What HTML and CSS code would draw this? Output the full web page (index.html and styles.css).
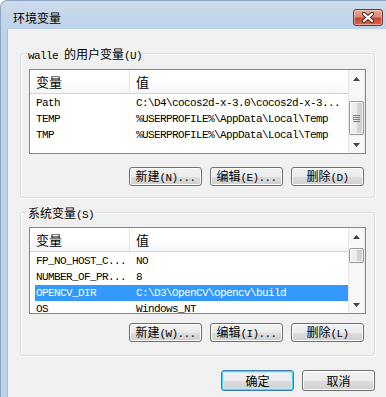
FILE: index.html
```html
<!DOCTYPE html>
<html lang="zh-CN">
<head>
<meta charset="utf-8">
<title>环境变量</title>
<link rel="stylesheet" href="styles.css">
</head>
<body>
<div class="window">
  <div class="titlebar">
    <span class="title">环境变量</span>
    <button class="close" aria-label="关闭">
      <svg width="14" height="11" viewBox="0 0 14 11">
        <path d="M3 2 L11 9 M11 2 L3 9" stroke="#5b2820" stroke-width="4.2" stroke-linecap="round"/>
        <path d="M3 2 L11 9 M11 2 L3 9" stroke="#ffffff" stroke-width="2.2" stroke-linecap="round"/>
      </svg>
    </button>
  </div>
  <div class="frame">
    <div class="edge"></div>
    <div class="client">
      <section class="group g1">
        <div class="legend"><span class="a">walle </span>的用户变量<span class="a">(U)</span></div>
        <div class="list l1">
          <div class="list-main">
            <div class="head"><div class="h1">变量</div><div class="h2">值</div></div>
            <div class="row first"><span class="c1">Path</span><span class="c2">C:\D4\cocos2d-x-3.0\cocos2d-x-3...</span></div>
            <div class="row"><span class="c1">TEMP</span><span class="c2">%USERPROFILE%\AppData\Local\Temp</span></div>
            <div class="row"><span class="c1">TMP</span><span class="c2">%USERPROFILE%\AppData\Local\Temp</span></div>
          </div>
          <div class="sb">
            <div class="sb-btn"><svg width="7" height="4" viewBox="0 0 7 4"><polygon points="0,4 3.5,0 7,4" fill="#444"/></svg></div>
            <div class="sb-track"><div class="thumb t1"><span class="grip"></span></div></div>
            <div class="sb-btn"><svg width="7" height="4" viewBox="0 0 7 4"><polygon points="0,0 7,0 3.5,4" fill="#444"/></svg></div>
          </div>
        </div>
        <div class="btns b1">
          <button class="btn">新建<span class="a">(N)...</span></button>
          <button class="btn">编辑<span class="a">(E)...</span></button>
          <button class="btn">删除<span class="a">(D)</span></button>
        </div>
      </section>

      <section class="group g2">
        <div class="legend">系统变量<span class="a">(S)</span></div>
        <div class="list l2">
          <div class="list-main">
            <div class="head"><div class="h1">变量</div><div class="h2">值</div></div>
            <div class="row first"><span class="c1">FP_NO_HOST_C...</span><span class="c2">NO</span></div>
            <div class="row"><span class="c1">NUMBER_OF_PR...</span><span class="c2">8</span></div>
            <div class="row selected"><span class="c1">OPENCV_DIR</span><span class="c2">C:\D3\OpenCV\opencv\build</span></div>
            <div class="row"><span class="c1">OS</span><span class="c2">Windows_NT</span></div>
          </div>
          <div class="sb">
            <div class="sb-btn"><svg width="7" height="4" viewBox="0 0 7 4"><polygon points="0,4 3.5,0 7,4" fill="#444"/></svg></div>
            <div class="sb-track"><div class="thumb t2"></div></div>
            <div class="sb-btn"><svg width="7" height="4" viewBox="0 0 7 4"><polygon points="0,0 7,0 3.5,4" fill="#444"/></svg></div>
          </div>
        </div>
        <div class="btns b2">
          <button class="btn">新建<span class="a">(W)...</span></button>
          <button class="btn">编辑<span class="a">(I)...</span></button>
          <button class="btn">删除<span class="a">(L)</span></button>
        </div>
      </section>

      <div class="dlg-btns">
        <button class="btn big default">确定</button>
        <button class="btn big">取消</button>
      </div>
    </div>
  </div>
</div>
</body>
</html>
```

FILE: styles.css
```css
html, body {
  margin: 0;
  padding: 0;
}
body {
  width: 386px;
  height: 397px;
  overflow: hidden;
  background: #ffffff;
  font-family: "Noto Sans CJK SC", "Liberation Sans", sans-serif;
  font-size: 12px;
  color: #000;
}
.a {
  font-family: "Liberation Mono", "DejaVu Sans Mono", monospace;
  font-size: 11px;
  letter-spacing: -0.6px;
}
.window {
  height: 397px;
  display: flex;
  flex-direction: column;
}
.titlebar {
  height: 29px;
  box-sizing: border-box;
  padding: 5px 3px 0 12px;
  display: flex;
  align-items: center;
  justify-content: space-between;
  background: linear-gradient(#ccdbec, #bed2e9);
  border-top: 1px solid #8ea6c2;
  border-left: 1px solid #8ea6c2;
  border-top-left-radius: 7px;
}
.title {
  font-size: 12px;
  line-height: 14px;
}
.close {
  width: 30px;
  height: 17px;
  box-sizing: border-box;
  padding: 0;
  margin: 0;
  border: 1px solid #6a3b36;
  border-radius: 3px;
  background: linear-gradient(#e9a99b, #dc8a78 45%, #c6452f 55%, #d16a52);
  box-shadow: inset 0 0 0 1px rgba(255, 220, 210, 0.5);
  display: flex;
  align-items: center;
  justify-content: center;
}
.frame {
  flex: 1;
  display: flex;
  background: #f0f0f0;
}
.edge {
  width: 8px;
  box-sizing: border-box;
  background: #bcd3ec;
  border-left: 1px solid #8ea6c2;
  border-right: 1px solid #a9bfd8;
}
.client {
  flex: 1;
  padding: 0 11px 0 12px;
}
.group {
  border: 1px solid #d5dfe5;
  border-radius: 3px;
  box-shadow: 1px 1px 0 #ffffff, inset 1px 1px 0 #ffffff;
  padding: 0 8px 11px 8px;
}
.g1 {
  margin-top: 24px;
}
.g2 {
  margin-top: 14px;
  padding-bottom: 13px;
}
.legend {
  width: fit-content;
  margin: -7px 0 0 -2px;
  padding: 0 1px;
  line-height: 14px;
  background: #f0f0f0;
  white-space: nowrap;
}
.list {
  display: flex;
  border: 1px solid #828790;
  background: #ffffff;
  box-sizing: border-box;
}
.l1 {
  height: 85px;
  margin-top: 6px;
}
.l2 {
  height: 87px;
  margin-top: 5px;
}
.list-main {
  flex: 1;
  overflow: hidden;
}
.head {
  height: 24px;
  box-sizing: border-box;
  display: flex;
  border-bottom: 1px solid #d5d5d5;
  background: linear-gradient(#ffffff 55%, #f4f5f7);
  font-size: 13px;
  line-height: 23px;
}
.h1 {
  width: 100px;
  box-sizing: border-box;
  padding-left: 6px;
  border-right: 1px solid #e3e5e8;
}
.h2 {
  padding-left: 6px;
}
.row {
  display: flex;
  height: 16px;
  line-height: 16px;
  margin-left: 5px;
  white-space: nowrap;
  font-family: "Liberation Mono", "DejaVu Sans Mono", monospace;
  font-size: 11px;
  letter-spacing: -0.6px;
}
.row.first {
  margin-top: 1px;
}
.row.selected {
  background: #3399ff;
  color: #ffffff;
}
.c1 {
  width: 95px;
  box-sizing: border-box;
  padding-left: 1px;
  overflow: hidden;
}
.c2 {
  padding-left: 6px;
}
.sb {
  width: 17px;
  display: flex;
  flex-direction: column;
  background: linear-gradient(to right, #e6e6e6, #f7f7f7 2px, #f7f7f7 14px, #ececec);
}
.sb-btn {
  height: 17px;
  display: flex;
  align-items: center;
  justify-content: center;
}
.sb-btn svg {
  display: block;
}
.sb-track {
  flex: 1;
}
.thumb {
  margin: 0 1px;
  box-sizing: border-box;
  border: 1px solid #9a9a9a;
  border-radius: 2px;
  background: linear-gradient(to right, #f4f4f4, #e9e9e9 50%, #d6d6d6 51%, #cfcfcf);
  box-shadow: inset 0 0 0 1px rgba(255, 255, 255, 0.7);
  display: flex;
  align-items: center;
  justify-content: center;
}
.t1 {
  margin-top: 14px;
  height: 34px;
}
.t2 {
  margin-top: 3px;
  height: 15px;
}
.grip {
  width: 7px;
  height: 7px;
  background: repeating-linear-gradient(#7d7d7d 0 1px, transparent 1px 2px);
}
.btns {
  display: flex;
  justify-content: flex-end;
  gap: 8px;
  padding-right: 2px;
}
.b1 {
  margin-top: 13px;
}
.b2 {
  margin-top: 9px;
}
.btn {
  width: 73px;
  height: 19px;
  box-sizing: border-box;
  margin: 0;
  padding: 0;
  border: 1px solid #707070;
  border-radius: 3px;
  background: linear-gradient(#f2f2f2, #ebebeb 50%, #dddddd 51%, #cfcfcf);
  box-shadow: inset 0 0 0 1px #fcfcfc;
  font-family: "Noto Sans CJK SC", "Liberation Sans", sans-serif;
  font-size: 12px;
  line-height: 16px;
  color: #000;
  white-space: nowrap;
}
.dlg-btns {
  display: flex;
  justify-content: flex-end;
  gap: 8px;
  margin-top: 14px;
}
.btn.big {
  height: 21px;
}
.btn.default {
  border-color: #3c7fb1;
  box-shadow: inset 0 0 0 1px #48d2fb, inset 0 0 0 2px #c4eafc;
}
```
